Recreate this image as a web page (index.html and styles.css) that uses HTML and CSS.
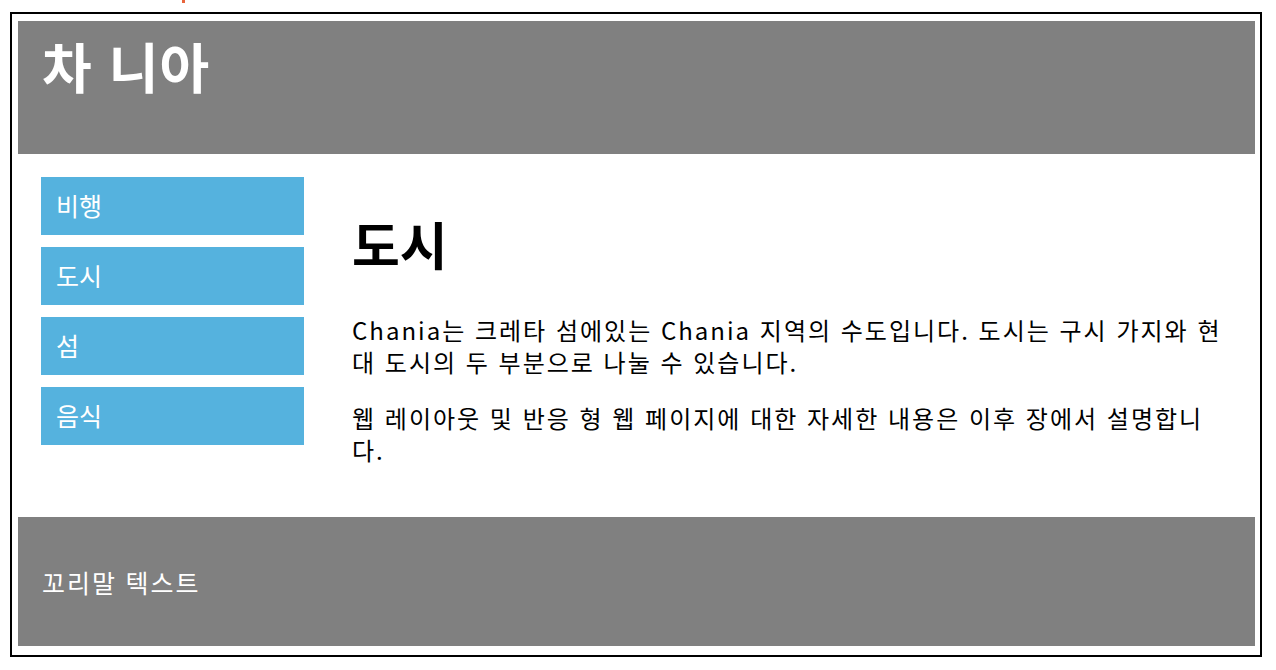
FILE: index.html
```html
<!DOCTYPE html>
<html lang="ko">
<head>
<meta charset="utf-8">
<title>차 니아</title>
<link rel="stylesheet" href="styles.css">
</head>
<body>
<span class="mark"></span>
<div class="page">
  <header class="site-header">
    <h1 class="site-title">차 니아</h1>
  </header>
  <div class="middle">
    <nav class="menu">
      <a class="menu-item" href="#">비행</a>
      <a class="menu-item" href="#">도시</a>
      <a class="menu-item" href="#">섬</a>
      <a class="menu-item" href="#">음식</a>
    </nav>
    <main class="content">
      <h1 class="content-title">도시</h1>
      <p>Chania는 크레타 섬에있는 Chania 지역의 수도입니다. 도시는 구시 가지와 현대 도시의 두 부분으로 나눌 수 있습니다.</p>
      <p>웹 레이아웃 및 반응 형 웹 페이지에 대한 자세한 내용은 이후 장에서 설명합니다.</p>
    </main>
  </div>
  <footer class="site-footer">
    <p>꼬리말 텍스트</p>
  </footer>
</div>
</body>
</html>
```
FILE: styles.css
```css
html, body {
  margin: 0;
  padding: 0;
  background: #fff;
}
body {
  font-family: "Open Sans", "Noto Sans CJK KR", sans-serif;
  color: #000;
  position: relative;
}
.mark {
  position: absolute;
  left: 182px;
  top: 0;
  width: 3px;
  height: 3px;
  background: #e8643c;
}
.page {
  margin: 12px 14px 13px 10px;
  border: 2px solid #000;
  padding: 7px 5px 9px 6px;
  height: 645px;
  box-sizing: border-box;
  display: flex;
  flex-direction: column;
}
.site-header {
  background: #808080;
  height: 133px;
  padding: 0 24px;
  box-sizing: border-box;
  flex: none;
}
.site-title {
  margin: 0;
  padding-top: 13px;
  font-family: "Noto Sans CJK KR", sans-serif;
  font-size: 54px;
  line-height: 64px;
  font-weight: bold;
  color: #fff;
  letter-spacing: 1px;
}
.middle {
  flex: 1;
  display: flex;
  align-items: flex-start;
}
.menu {
  width: 263px;
  margin: 23px 0 0 23px;
  display: flex;
  flex-direction: column;
  gap: 12px;
  flex: none;
}
.menu-item {
  display: block;
  height: 58px;
  line-height: 58px;
  padding-left: 15px;
  background: #55b2de;
  color: #fff;
  font-size: 25px;
  text-decoration: none;
}
.content {
  flex: 1;
  padding: 0 26px 0 48px;
}
.content-title {
  margin: 58px 0 38px;
  font-family: "Noto Sans CJK KR", sans-serif;
  font-size: 52px;
  line-height: 64px;
  font-weight: bold;
}
.content p {
  margin: 0 0 24px;
  font-family: "Noto Sans CJK KR", sans-serif;
  font-size: 24px;
  line-height: 32px;
  letter-spacing: 2px;
}
.site-footer {
  background: #808080;
  height: 129px;
  padding: 0 24px;
  box-sizing: border-box;
  display: flex;
  align-items: center;
  flex: none;
}
.site-footer p {
  margin: 0;
  color: #fff;
  font-size: 25px;
  letter-spacing: 2px;
}
```
